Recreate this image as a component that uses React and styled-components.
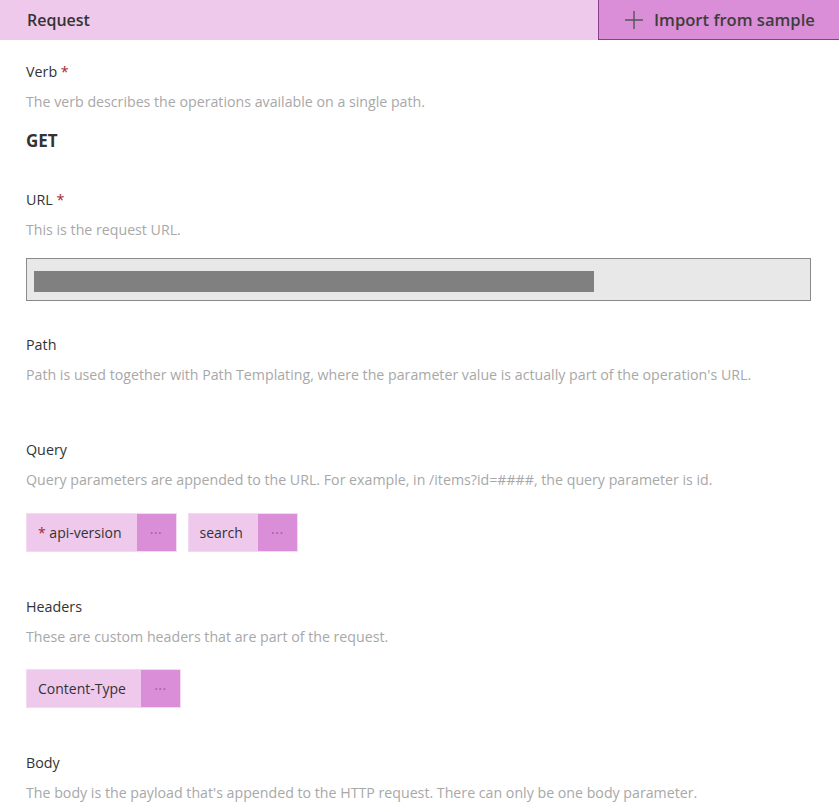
import React from "react";
import styled, { createGlobalStyle } from "styled-components";

const Global = createGlobalStyle`
  body {
    margin: 0;
    background: #ffffff;
    font-family: "Open Sans", "Noto Sans", sans-serif;
    color: #333333;
  }
`

const Page = styled.div`
  width: 839px;
`

const Bar = styled.header`
  display: flex;
  align-items: stretch;
  justify-content: space-between;
  height: 40px;
  background-color: #eec9ec;
`

const Title = styled.h2`
  margin: 0;
  padding-left: 27px;
  display: flex;
  align-items: center;
  font-size: 16px;
  font-weight: 600;
  color: #333;
`

const ImportBtn = styled.button`
  display: flex;
  align-items: center;
  gap: 10px;
  width: 241px;
  padding: 0 0 0 25px;
  border: none;
  border-left: 1px solid #8b3f8a;
  border-bottom: 1px solid #8b3f8a;
  background-color: #db8ed8;
  font-family: inherit;
  font-size: 16.6px;
  font-weight: 600;
  color: #3d3d3d;
  cursor: pointer;
`

const Body = styled.main`
  padding: 0 26px;
`

const Section = styled.section`
  margin-top: ${p => p.top}px;
`

const Label = styled.div`
  font-size: 14.3px;
  line-height: 20px;
  color: #333;
`

const Star = styled.span`
  color: #a4262c;
`

const Desc = styled.div`
  margin-top: 10px;
  font-size: 14.2px;
  line-height: 20px;
  color: #a8a8a8;
`

const Verb = styled.div`
  margin-top: 18px;
  font-size: 17px;
  font-weight: 700;
  line-height: 22px;
  color: #333;
`

const UrlBox = styled.div`
  margin-top: 18px;
  width: 785px;
  height: 43px;
  box-sizing: border-box;
  padding: 12px 7px;
  background-color: #e8e8e8;
  border: 1px solid #8a8a8a;
`

const Redacted = styled.div`
  width: 560px;
  height: 21px;
  background-color: #808080;
`

const Chips = styled.div`
  display: flex;
  gap: 11px;
  margin-top: ${p => p.top || 23}px;
`

const Chip = styled.div`
  display: flex;
  height: 39px;
  border: 1px solid #f3d9f2;
  box-sizing: border-box;
  background-color: #eec9ec;
`

const ChipName = styled.span`
  display: flex;
  align-items: center;
  padding: 0 15px 0 11px;
  font-size: 14px;
  color: #333;
`

const ChipMore = styled.span`
  display: flex;
  align-items: center;
  justify-content: center;
  width: 39px;
  background-color: #db8ed8;
  color: #a35ba1;
  font-size: 14px;
  letter-spacing: 0.5px;
`

function Plus() {
  return (
    <svg width="20" height="20" viewBox="0 0 20 20">
      <path d="M10 1v18M1 10h18" stroke="#555" strokeWidth="1.4" fill="none" />
    </svg>
  )
}

function Param({ name, required }) {
  return (
    <Chip>
      <ChipName>{required && <Star>*&nbsp;</Star>}{name}</ChipName>
      <ChipMore>···</ChipMore>
    </Chip>
  )
}

export default function App() {
  return (
    <Page>
      <Global />
      <Bar>
        <Title>Request</Title>
        <ImportBtn><Plus />Import from sample</ImportBtn>
      </Bar>
      <Body>
        <Section top={22}>
          <Label>Verb <Star>*</Star></Label>
          <Desc>The verb describes the operations available on a single path.</Desc>
          <Verb>GET</Verb>
        </Section>
        <Section top={38}>
          <Label>URL <Star>*</Star></Label>
          <Desc>This is the request URL.</Desc>
          <UrlBox><Redacted /></UrlBox>
        </Section>
        <Section top={34}>
          <Label>Path</Label>
          <Desc>Path is used together with Path Templating, where the parameter value is actually part of the operation's URL.</Desc>
        </Section>
        <Section top={55}>
          <Label>Query</Label>
          <Desc>Query parameters are appended to the URL. For example, in /items?id=####, the query parameter is id.</Desc>
          <Chips>
            <Param name="api-version" required />
            <Param name="search" />
          </Chips>
        </Section>
        <Section top={45}>
          <Label>Headers</Label>
          <Desc>These are custom headers that are part of the request.</Desc>
          <Chips top={22}>
            <Param name="Content-Type" />
          </Chips>
        </Section>
        <Section top={45}>
          <Label>Body</Label>
          <Desc>The body is the payload that's appended to the HTTP request. There can only be one body parameter.</Desc>
        </Section>
      </Body>
    </Page>
  )
}
